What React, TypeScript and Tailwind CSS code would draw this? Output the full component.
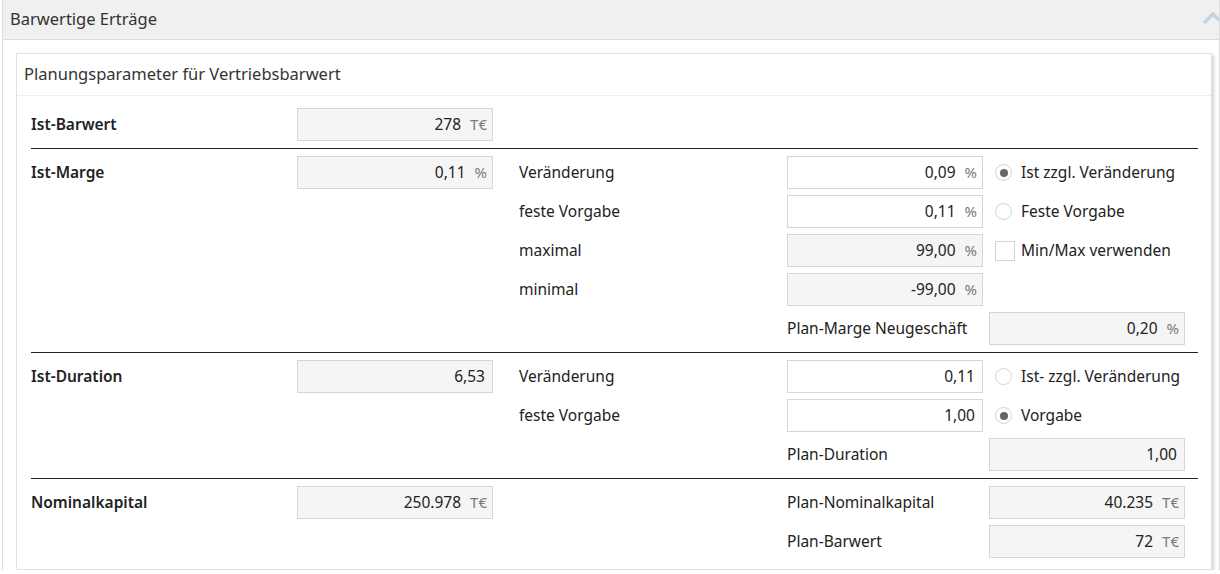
import React from "react";

type Field = { value: string; unit?: string; readOnly?: boolean };

function ValueBox({ value, unit, readOnly = true }: Field) {
  return (
    <div
      className={`flex h-[33px] w-[196px] items-center justify-end border border-[#d6d6d6] text-[15.5px] text-[#222] ${
        readOnly ? "bg-[#f5f5f5]" : "bg-white"
      } ${unit ? "" : "pr-[7px]"}`}
    >
      <span>{value}</span>
      {unit && <span className="ml-[9px] pr-[5px] text-[15px] text-[#7a7a7a]">{unit}</span>}
    </div>
  );
}

function Radio({ checked, label }: { checked?: boolean; label: string }) {
  return (
    <div className="ml-[12px] flex items-center">
      <span className="flex h-[17px] w-[17px] items-center justify-center rounded-full border border-[#d4d4d4] bg-white">
        {checked && <span className="h-[8px] w-[8px] rounded-full bg-[#666]" />}
      </span>
      <span className="ml-[9px] text-[15.5px] text-[#222]">{label}</span>
    </div>
  );
}

function Checkbox({ label }: { label: string }) {
  return (
    <div className="ml-[12px] flex items-center">
      <span className="h-[20px] w-[20px] border border-[#d4d4d4] bg-white" />
      <span className="ml-[6px] text-[15.5px] text-[#222]">{label}</span>
    </div>
  );
}

function OptionRow({ label, field, extra }: { label: string; field: Field; extra?: React.ReactNode }) {
  return (
    <div className="flex h-[33px] items-center">
      <span className="w-[268px] text-[15.5px] text-[#222]">{label}</span>
      <ValueBox {...field} />
      {extra}
    </div>
  );
}

function PlanRow({ label, field }: { label: string; field: Field }) {
  return (
    <div className="flex h-[33px] items-center">
      <span className="w-[268px]" />
      <span className="w-[202px] text-[15.5px] text-[#222]">{label}</span>
      <ValueBox {...field} />
    </div>
  );
}

function Section({ label, field, children, last }: { label: string; field: Field; children?: React.ReactNode; last?: boolean }) {
  return (
    <div className={`flex py-[7px] ${last ? "" : "border-b border-[#222]"}`}>
      <div className="flex h-[33px] w-[488px] items-center">
        <span className="w-[266px] text-[15.5px] font-semibold text-[#222]">{label}</span>
        <ValueBox {...field} />
      </div>
      <div className="flex flex-col gap-[6px]">{children}</div>
    </div>
  );
}

export default function App() {
  return (
    <div className="h-[574px] w-[1220px] overflow-hidden bg-white" style={{ fontFamily: '"Noto Sans", "Open Sans", sans-serif' }}>
      <div className="ml-[2px] w-[1218px] overflow-hidden border-x border-[#dcdcdc]">
        <div className="flex h-[40px] items-center justify-between border-b border-[#dcdcdc] bg-[#f0f0f0] pl-[7px]">
          <span className="text-[16.5px] text-[#333]">Barwertige Erträge</span>
          <svg width="22" height="16" viewBox="0 0 22 16" className="mr-[-5px] mt-[-4px] shrink-0">
            <polyline points="2,13 11,4 20,13" fill="none" stroke="#c6d3df" strokeWidth="3.5" />
          </svg>
        </div>
        <div className="pl-[13px] pt-[13px]">
          <div className="w-[1196px] border border-[#e2e2e2] bg-white shadow-[2px_2px_3px_rgba(0,0,0,0.18)]">
            <div className="flex h-[42px] items-center border-b border-[#eeeeee] px-[7px] text-[16.5px] text-[#333]">
              Planungsparameter für Vertriebsbarwert
            </div>
            <div className="pb-[4px] pl-[14px] pr-[13px] pt-[5px]">
              <Section label="Ist-Barwert" field={{ value: "278", unit: "T€" }} />
              <Section label="Ist-Marge" field={{ value: "0,11", unit: "%" }}>
                <OptionRow
                  label="Veränderung"
                  field={{ value: "0,09", unit: "%", readOnly: false }}
                  extra={<Radio checked label="Ist zzgl. Veränderung" />}
                />
                <OptionRow
                  label="feste Vorgabe"
                  field={{ value: "0,11", unit: "%", readOnly: false }}
                  extra={<Radio label="Feste Vorgabe" />}
                />
                <OptionRow label="maximal" field={{ value: "99,00", unit: "%" }} extra={<Checkbox label="Min/Max verwenden" />} />
                <OptionRow label="minimal" field={{ value: "-99,00", unit: "%" }} />
                <PlanRow label="Plan-Marge Neugeschäft" field={{ value: "0,20", unit: "%" }} />
              </Section>
              <Section label="Ist-Duration" field={{ value: "6,53" }}>
                <OptionRow
                  label="Veränderung"
                  field={{ value: "0,11", readOnly: false }}
                  extra={<Radio label="Ist- zzgl. Veränderung" />}
                />
                <OptionRow
                  label="feste Vorgabe"
                  field={{ value: "1,00", readOnly: false }}
                  extra={<Radio checked label="Vorgabe" />}
                />
                <PlanRow label="Plan-Duration" field={{ value: "1,00" }} />
              </Section>
              <Section label="Nominalkapital" field={{ value: "250.978", unit: "T€" }} last>
                <PlanRow label="Plan-Nominalkapital" field={{ value: "40.235", unit: "T€" }} />
                <PlanRow label="Plan-Barwert" field={{ value: "72", unit: "T€" }} />
              </Section>
            </div>
          </div>
        </div>
      </div>
    </div>
  );
}
